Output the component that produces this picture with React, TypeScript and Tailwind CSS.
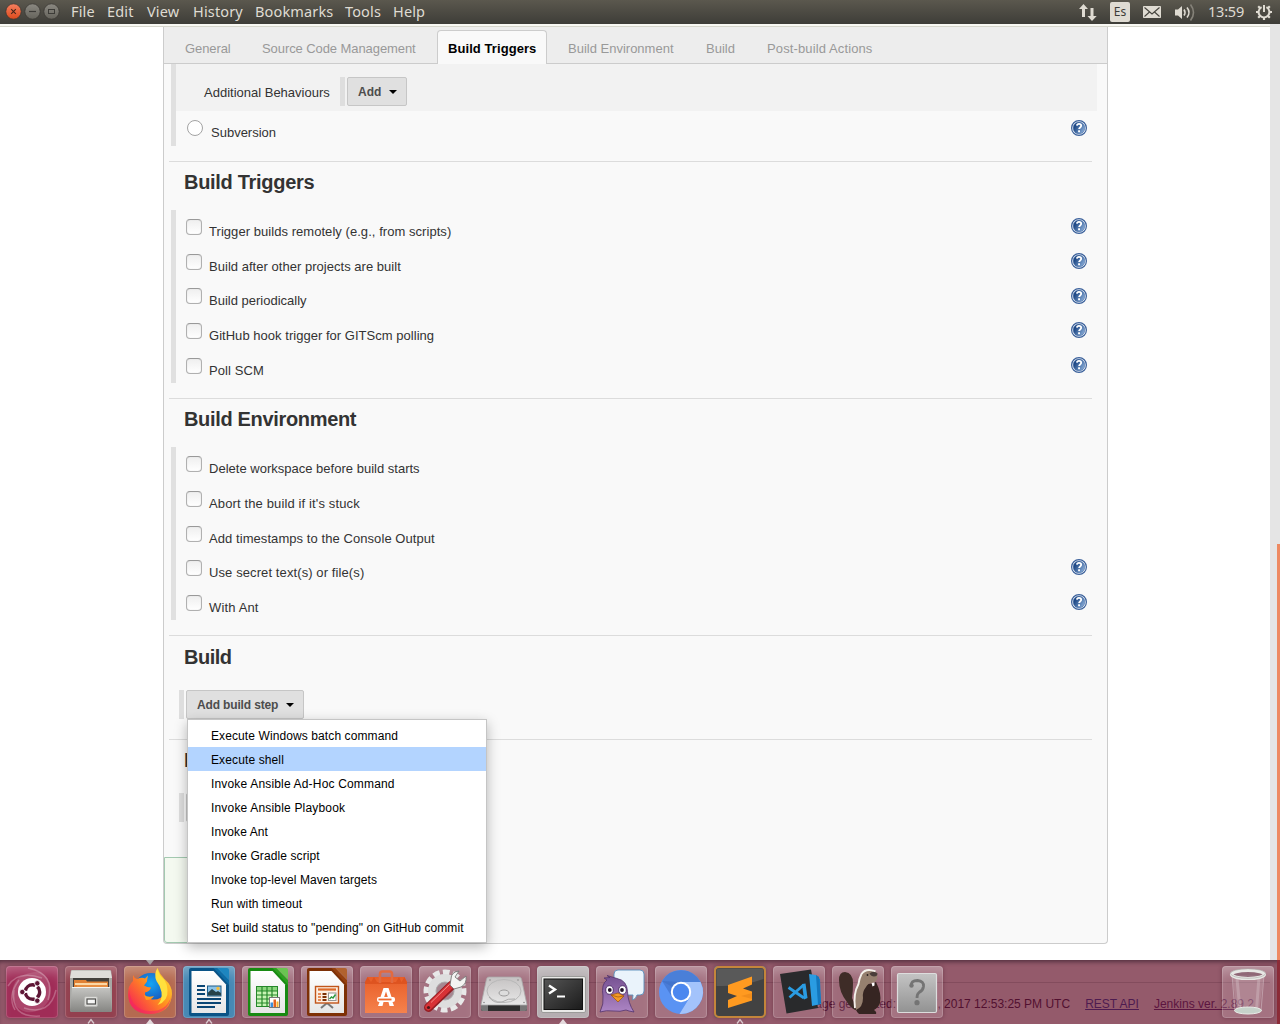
import React from "react";

const sans = "font-['Liberation_Sans',Arial,sans-serif]";

function HelpIcon() {
  return (
    <svg width="16" height="16" viewBox="0 0 16 16" className="block shrink-0">
      <defs>
        <linearGradient id="help" x1="0" y1="0.2" x2="1" y2="0.8">
          <stop offset="0.2" stopColor="#204a87" />
          <stop offset="1" stopColor="#8fb2dc" />
        </linearGradient>
      </defs>
      <circle cx="8" cy="8" r="7.4" fill="#fff" stroke="#3b619b" strokeWidth="1.2" />
      <circle cx="8" cy="8" r="5.9" fill="url(#help)" stroke="#4c72a9" strokeWidth="0.6" />
      <path d="M5.9 5.6C6 4.2 7 3.9 8 3.9c1.300 0 2.200.7 2.200 1.900 0 1.700-2.100 1.600-2.100 3.300" fill="none" stroke="#fff" strokeWidth="1.800" />
      <rect x="7.100" y="10.300" width="1.900" height="1.900" fill="#fff" />
    </svg>
  );
}

function Arrow() {
  return (
    <svg width="8" height="4" viewBox="0 0 8 4" className="block">
      <path d="M0 0h8L4 4z" fill="#000" />
    </svg>
  );
}

function GrayButton({ label, className }: { label: string; className: string }) {
  return (
    <div className="flex h-[29px] gap-[2px]">
      <div className="w-[5px] bg-[#dedede]" />
      <button className={`flex items-center justify-between rounded-[2px] border border-[#c6c6c6] bg-[#e0e0e0] pl-[10px] pr-[9px] text-[12px] font-bold text-[#4d4d4d] ${className}`}>
        <span className="whitespace-nowrap pt-px">{label}</span>
        <Arrow />
      </button>
    </div>
  );
}

type Option = { label: string; help?: boolean; track?: string };

function OptionList({ items, className = "" }: { items: Option[]; className?: string }) {
  return (
    <div className={`ml-[7px] mr-[20px] flex h-[173px] flex-col border-l-[5px] border-[#e0e0e0] ${className}`}>
      {items.map((o) => (
        <div key={o.label} className="flex h-[34.7px] shrink-0 items-start pl-[10px]">
          <div className="mt-[9px] size-4 shrink-0 rounded-[4px] border border-[#b0b0b0] border-t-[#999] bg-linear-to-b from-[#efefef] to-white shadow-[inset_0_0_1px_#ccc]" />
          <span className={`ml-[7px] mt-[12px] flex-1 text-[13px] leading-5 text-[#333] ${o.track ?? ""}`}>{o.label}</span>
          {o.help && (
            <span className="mt-[8.200px]">
              <HelpIcon />
            </span>
          )}
        </div>
      ))}
    </div>
  );
}

function SectionTitle({ children, className = "pt-[8px] tracking-[-0.300px]" }: { children: React.ReactNode; className?: string }) {
  return (
    <div className={`ml-[5px] mr-[15px] h-[49px] border-t border-[#dcdcdc] pl-[15px] text-[20px] font-bold leading-6 text-[#333] ${className}`}>
      {children}
    </div>
  );
}

const triggers: Option[] = [
  { label: "Trigger builds remotely (e.g., from scripts)", help: true, track: "tracking-[0.050px]" },
  { label: "Build after other projects are built", help: true, track: "tracking-[0.030px]" },
  { label: "Build periodically", help: true },
  { label: "GitHub hook trigger for GITScm polling", help: true, track: "tracking-[0.030px]" },
  { label: "Poll SCM", help: true, track: "tracking-[0.100px]" },
];

const environment: Option[] = [
  { label: "Delete workspace before build starts", track: "tracking-[0.010px]" },
  { label: "Abort the build if it's stuck", track: "tracking-[0.130px]" },
  { label: "Add timestamps to the Console Output", track: "tracking-[0.070px]" },
  { label: "Use secret text(s) or file(s)", help: true, track: "tracking-[0.100px]" },
  { label: "With Ant", help: true, track: "tracking-[0.150px]" },
];

const steps = [
  { label: "Execute Windows batch command", track: "tracking-[0.100px]" },
  { label: "Execute shell", track: "tracking-[0.120px]" },
  { label: "Invoke Ansible Ad-Hoc Command", track: "tracking-[0.170px]" },
  { label: "Invoke Ansible Playbook", track: "tracking-[0.180px]" },
  { label: "Invoke Ant", track: "tracking-[0.100px]" },
  { label: "Invoke Gradle script", track: "tracking-[0.100px]" },
  { label: "Invoke top-level Maven targets", track: "tracking-[0.090px]" },
  { label: "Run with timeout", track: "tracking-[0.120px]" },
  { label: 'Set build status to "pending" on GitHub commit', track: "tracking-[0.070px]" },
];

function StepMenu() {
  return (
    <div className="absolute left-[23px] top-[692px] w-[300px] border border-[#c5c5c5] bg-white py-[3px] text-[12px] text-black shadow-[0_4px_12px_rgba(0,0,0,0.28)]">
      {steps.map((s, i) => (
        <div key={s.label} className={`h-6 whitespace-nowrap pl-[23px] pt-px leading-6 ${s.track} ${i === 1 ? "bg-[#b3d4ff]" : ""}`}>
          {s.label}
        </div>
      ))}
    </div>
  );
}

function Tabs() {
  const tab = "h-full pt-[13px] leading-[18px] whitespace-nowrap";
  return (
    <div className="flex h-[37px] border-b border-[#ccc] bg-[#ededed] text-[13px] text-[#999]">
      <div className={`${tab} w-[77px] pl-[21px] tracking-[-0.100px]`}>General</div>
      <div className={`${tab} w-[196px] pl-[21px] tracking-[-0.080px]`}>Source Code Management</div>
      <div className="mt-[3px] h-[34px] w-[110px] whitespace-nowrap rounded-t-[4px] border border-b-0 border-[#ccc] bg-[#f9f9f9] pl-[10px] pt-[9px] font-bold leading-[18px] tracking-[0.070px] text-black">
        Build Triggers
      </div>
      <div className={`${tab} w-[138px] pl-[21px]`}>Build Environment</div>
      <div className={`${tab} w-[61px] pl-[21px]`}>Build</div>
      <div className={`${tab} pl-[21px] tracking-[0.120px]`}>Post-build Actions</div>
    </div>
  );
}

function ConfigPanel() {
  return (
    <div className="relative ml-[163px] h-[917px] w-[945px] rounded-b-[4px] border border-t-0 border-[#ccc] bg-[#f9f9f9]">
      <Tabs />
      <div className="ml-[7px] mr-[10px] h-[82px] border-l-[5px] border-[#e0e0e0]">
        <div className="flex h-[47px] items-start bg-[#f2f2f2] pt-[13px]">
          <span className="ml-[28px] w-[136px] pt-px text-[13px] leading-[30px] text-[#333]">Additional Behaviours</span>
          <GrayButton label="Add" className="w-[60px]" />
        </div>
        <div className="flex items-start pl-[11px] pr-[10px] pt-[9px]">
          <div className="size-4 rounded-full border border-[#a3a3a3] bg-white" />
          <span className="ml-[8px] mt-[3px] flex-1 text-[13px] leading-5 text-[#333]">Subversion</span>
          <HelpIcon />
        </div>
      </div>
      <div className="h-[15px]" />
      <SectionTitle>Build Triggers</SectionTitle>
      <OptionList items={triggers} />
      <div className="h-[15px]" />
      <SectionTitle className="pt-[8px] tracking-[-0.330px]">Build Environment</SectionTitle>
      <OptionList items={environment} className="pt-[0.200px]" />
      <div className="h-[15px]" />
      <SectionTitle className="pt-[9px] tracking-[-0.500px]">Build</SectionTitle>
      <div className="ml-[15px] mt-[6px] tracking-[-0.150px]">
        <GrayButton label="Add build step" className="w-[118px]" />
      </div>
      <div className="h-5" />
      <SectionTitle>P</SectionTitle>
      <div className="ml-[15px] mt-[5px]">
        <GrayButton label="" className="w-[118px]" />
      </div>
      <div className="mt-[35px] h-[86px] w-[200px] rounded-bl-[3px] border border-[#a3c9b0] bg-[#f4f9f0]" />
      <StepMenu />
    </div>
  );
}

const menuItems = [
  { label: "File", cls: "w-[36px]" },
  { label: "Edit", cls: "w-[40px]" },
  { label: "View", cls: "w-[46px]" },
  { label: "History", cls: "w-[62px]" },
  { label: "Bookmarks", cls: "w-[90px]" },
  { label: "Tools", cls: "w-[48px]" },
  { label: "Help", cls: "w-[40px]" },
];

function WindowButtons() {
  return (
    <svg width="65" height="24" viewBox="0 0 65 24" className="block shrink-0">
      <defs>
        <linearGradient id="closeBtn" x1="0" y1="0" x2="0" y2="1">
          <stop offset="0" stopColor="#f58060" />
          <stop offset="1" stopColor="#dd4a1c" />
        </linearGradient>
        <linearGradient id="grayBtn" x1="0" y1="0" x2="0" y2="1">
          <stop offset="0" stopColor="#8b8982" />
          <stop offset="1" stopColor="#65635b" />
        </linearGradient>
      </defs>
      <circle cx="13.500" cy="11.500" r="7.700" fill="url(#closeBtn)" stroke="#36342f" strokeWidth="0.700" />
      <path d="M11.200 9.200l4.600 4.600m0-4.600l-4.600 4.600" stroke="#45251a" strokeWidth="1.100" />
      <circle cx="32.500" cy="11.500" r="7.700" fill="url(#grayBtn)" stroke="#36342f" strokeWidth="0.700" />
      <path d="M29 11.500h7" stroke="#3c3b37" strokeWidth="1.200" />
      <circle cx="51.500" cy="11.500" r="7.700" fill="url(#grayBtn)" stroke="#36342f" strokeWidth="0.700" />
      <rect x="48.500" y="9.500" width="6" height="4" fill="none" stroke="#3c3b37" />
    </svg>
  );
}

function TopBar() {
  return (
    <div className="flex h-6 shrink-0 items-center bg-linear-to-b from-[#5b584e] to-[#3e3d38] font-['Noto_Sans',sans-serif] text-[14.500px] text-[#dfdbd2]">
      <WindowButtons />
      <div className="flex flex-1 pl-[6px] tracking-[0.150px]">
        {menuItems.map((m) => (
          <div key={m.label} className={`${m.cls} h-6 whitespace-nowrap leading-[22px]`}>
            {m.label}
          </div>
        ))}
      </div>
      <svg width="20" height="24" viewBox="0 0 20 24" className="mr-[11px]" fill="#dfdbd2">
        <path d="M4.500 4L9 9H6v8H3V9H0zM13 21L8.500 16h3V8h3v8h3.200z" />
      </svg>
      <div className="mr-[13px] h-5 w-5 rounded-[2px] bg-[#dfdbd2] text-center text-[12px] leading-5 text-[#3c3b37]">Es</div>
      <svg width="18" height="24" viewBox="0 0 18 24" className="mr-[14px]">
        <rect y="6" width="18" height="12" rx="0.800" fill="#dfdbd2" />
        <path d="M1.500 7.500L9 14l7.500-6.500M1.500 16.500L6.500 12M16.500 16.500L11.500 12" fill="none" stroke="#45433d" strokeWidth="1.100" />
      </svg>
      <svg width="21" height="24" viewBox="0 0 21 24" className="mr-[12px]" fill="none" stroke="#dfdbd2" strokeWidth="1.600">
        <path d="M0 9.500h3l4-3.500v13l-4-3.500H0z" fill="#dfdbd2" stroke="none" />
        <path d="M9 9.500q2 3 0 6" />
        <path d="M12 7.500q4 5 0 10" />
        <path d="M15.500 4.500q6 8 0 16" stroke="#858279" />
      </svg>
      <div className="h-6 w-[47px] whitespace-nowrap leading-[22px] tracking-[-0.200px]">13:59</div>
      <svg width="18" height="24" viewBox="0 0 18 24" className="mr-[7px]" fill="none" stroke="#dfdbd2">
        <path d="M6.600 7.200A5.400 5.400 0 1 0 11.400 7.200" strokeWidth="2" />
        <path d="M9 5v7" strokeWidth="2" />
        <path d="M1 12h2.500M14.500 12H17M9 17.500V20M3.200 6.200L5 8M13 8l1.800-1.800M3.200 17.800L5 16M13 16l1.800 1.800" strokeWidth="2.200" />
      </svg>
    </div>
  );
}

function DocBase({ dark, mid, light }: { dark: string; mid: string; light: string }) {
  return (
    <g>
      <path d="M8 2h25l13 15v31q0 2-2 2H8q-2 0-2-2V4q0-2 2-2z" fill={dark} />
      <path d="M8.500 5h22L43 18.500V47H8.500z" fill="url(#paper)" />
      <path d="M30.500 2h4L46 14v5z" fill={mid} />
      <path d="M34.500 2H44q2 0 2 2v9.500z" fill={light} />
    </g>
  );
}

const icons: Record<string, React.ReactNode> = {
  ubuntu: (
    <g fill="none">
      <path d="M2 20Q12 4 36 12M22 2Q50 8 42 34M50 24Q44 50 18 42M34 50Q4 52 8 24M9 44Q1 30 13 14" stroke="#fff" strokeOpacity="0.250" strokeWidth="1.500" />
      <path d="M6 26Q8 6 34 6Q48 14 44 32Q36 48 20 46Q6 42 6 26z" fill="#fff" fillOpacity="0.120" />
      <circle cx="26" cy="26" r="14" fill="#fff" />
      <circle cx="26.500" cy="26" r="7.200" stroke="#5d1535" strokeWidth="3.400" strokeDasharray="12.600 2.480" strokeDashoffset="-8.780" />
      <g fill="#5d1535" stroke="#fff" strokeWidth="0.800">
        <circle cx="16.300" cy="26" r="2.700" />
        <circle cx="31.300" cy="17.300" r="2.700" />
        <circle cx="31.300" cy="34.700" r="2.700" />
      </g>
    </g>
  ),
  files: (
    <g>
      <path d="M7 4h38q1 0 1.300 1.500L47 13v31q0 2-2 2H7q-2 0-2-2V13l.7-7.500Q6 4 7 4z" fill="#a8a8a5" />
      <path d="M6.500 4.500h39L47 12H5z" fill="#deddda" />
      <path d="M8 12h36v10H8z" fill="#42403d" />
      <path d="M9 14h12l1 1.500h21V22H9z" fill="#e08135" />
      <path d="M10 17h32v2H10z" fill="#fbd7a5" />
      <path d="M12 19h30v3H12z" fill="#e88f43" />
      <path d="M7 21h38l2 23q0 2-2 2H7q-2 0-2-2z" fill="url(#metal)" />
      <path d="M7 21.500h38" stroke="#f4f4f2" />
      <rect x="19.500" y="30.500" width="13" height="10" rx="1.500" fill="#dededb" stroke="#b7b7b4" />
      <rect x="22" y="33" width="8.500" height="5" fill="#f6f6f5" stroke="#4e4e4b" strokeWidth="1.200" />
    </g>
  ),
  firefox: (
    <g>
      <circle cx="27" cy="25" r="18" fill="url(#ffBlue)" />
      <path d="M9 9q1 3 4 4 5-2 8-.5l3-3q-1 5-1 6l-3 4q3 2 7 2-1 4-6 5-1 5 7 7 9 1 13-7 2-4-2-13l-5-4Q33 4 33.500 2q2 6 7 11 8 7 7.500 15-1 19-22 20Q5 47 4 29q0-10 5-14z" fill="url(#ffOrange)" />
      <path d="M33.500 2q-4 6-1 13 4 5 5 11 1 8-4 13 11-4 10-15 0-5-3-10-6-5-7-12z" fill="#ffe03d" />
      <path d="M20 29q4 3 10 1-2 4-8 4z" fill="#ff9c1c" />
      <path d="M5 23q2 21 20 22Q42 46 47 31q-3 17-22 17Q2 47 5 23z" fill="#f0246a" fillOpacity="0.500" />
    </g>
  ),
  writer: (
    <g>
      <DocBase dark="#0a5386" mid="#0c6ca6" light="#1d86c0" />
      <path d="M14 20h8M14 24h8M14 28h8M14 33h24M14 37h24M14 41h18" stroke="#0a4674" strokeWidth="2" />
      <rect x="24.500" y="20" width="13.500" height="10" fill="#8bc3e8" stroke="#1c5c88" />
      <path d="M25 29.500v-3l4-3.500 4 3 2-1 3 2v2.500z" fill="#264148" />
      <circle cx="35" cy="22.500" r="1.700" fill="#f5bd3c" />
    </g>
  ),
  calc: (
    <g>
      <DocBase dark="#188a12" mid="#2ca01f" light="#6ac451" />
      <rect x="14.500" y="20.500" width="21" height="20" fill="#c8f4b4" stroke="#25872a" />
      <path d="M15 21h20v4H15z" fill="#8cd67e" />
      <path d="M14.500 25h21M14.500 29h21M14.500 33h21M14.500 37h21M20 20.500v20M25 20.500v20M30 20.500v20" stroke="#25872a" strokeWidth="1.200" />
      <rect x="27.500" y="31.500" width="10" height="10" fill="#fff" stroke="#777" />
      <rect x="28.500" y="36.500" width="2.500" height="4.500" fill="#3b8edb" />
      <rect x="31.500" y="33.500" width="2.500" height="7.500" fill="#e4631e" />
      <rect x="34.500" y="35.500" width="2" height="5.500" fill="#f5b22d" />
    </g>
  ),
  impress: (
    <g>
      <DocBase dark="#7d3006" mid="#95400f" light="#b1622f" />
      <path d="M26 37l-6 5M26 37l6 5" stroke="#777" strokeWidth="2" />
      <rect x="14.500" y="20.500" width="23" height="16.500" fill="#fdeee2" stroke="#c1551a" strokeWidth="1.400" />
      <path d="M17 23.500h18" stroke="#dd6a28" strokeWidth="2.200" />
      <path d="M17 28h3M17 31h3M17 34h3" stroke="#e58a58" strokeWidth="1.800" />
      <path d="M21.500 28h4M21.500 31h4M21.500 34h4" stroke="#7d3006" strokeWidth="2" />
      <rect x="27.500" y="27" width="7.500" height="7.500" fill="#fff" stroke="#969696" />
      <path d="M28.500 33l2-2 1.500 1 2.500-3.500" fill="none" stroke="#2f9a3f" strokeWidth="1.500" />
    </g>
  ),
  software: (
    <g>
      <path d="M5 47V16l2.500-5h37l2.500 5v31z" fill="url(#bag)" />
      <path d="M5 16l2.500-5 3.500 5 3-5 3 5h19l3-5 2.500 5 3-5 2.500 5v2H5z" fill="#d94d1b" fillOpacity="0.700" />
      <path d="M20 17V8q0-2.500 2.500-2.500h7Q32 5.500 32 8v9" fill="none" stroke="#e26a40" strokeWidth="2.600" />
      <path d="M23.500 22h5l3 9h-3.700L26 25.500 24.200 31h-3.700zM19.500 36h4l-1 4h-4.500zM28.500 36h4l1.500 4h-4.500z" fill="#fff" />
      <rect x="17" y="31" width="18" height="5" rx="2" fill="#fff" />
      <path d="M18.500 33.500h13" stroke="#ef6b31" strokeWidth="1.800" />
    </g>
  ),
  settings: (
    <g>
      <circle cx="26" cy="25" r="18.500" fill="none" stroke="#e8e8e8" strokeWidth="6" strokeDasharray="6.400 3.287" transform="rotate(-8 26 25)" />
      <circle cx="26" cy="25" r="13" fill="#fff" fillOpacity="0.300" stroke="#dedede" strokeWidth="8" />
      <circle cx="26" cy="25" r="9" fill="#000" fillOpacity="0.130" stroke="#aaa" />
      <path d="M9.500 41.500L33 19" stroke="#941e24" strokeWidth="9" strokeLinecap="round" />
      <path d="M9.500 41L33 18.500" stroke="#d83236" strokeWidth="6.500" strokeLinecap="round" />
      <path d="M12 36.500L32 17" stroke="#f58b86" strokeWidth="1" />
      <circle cx="9.500" cy="41.500" r="1.600" fill="#4e171b" />
      <path d="M31 19l4 4 7-2q6-3 5-11l-6 5-5-4 4-6q-8 1-8 8z" fill="#f4f4f2" stroke="#777" strokeWidth="0.900" />
    </g>
  ),
  disk: (
    <g>
      <path d="M3 39h46v4q0 2-2 2H5q-2 0-2-2z" fill="#2e2e2e" />
      <path d="M3 39h7v6H5q-2 0-2-2zM42 39h7v4q0 2-2 2h-5z" fill="#777" />
      <path d="M11 11h30q2 0 2.500 2L49 39H3l5.500-26Q9 11 11 11z" fill="url(#metalLight)" stroke="#aaa" strokeWidth="0.800" />
      <ellipse cx="26" cy="25" rx="17" ry="11.500" fill="none" stroke="#b8b8b8" />
      <path d="M11 31q5 7 13 5 6-4 13-3" fill="none" stroke="#aaa" />
      <ellipse cx="26" cy="27" rx="5" ry="3" fill="#ddd" stroke="#9c9c9c" />
      <circle cx="12" cy="14" r="0.800" fill="#888" />
      <circle cx="40" cy="14" r="0.800" fill="#888" />
      <circle cx="6" cy="36.500" r="0.800" fill="#888" />
      <circle cx="46" cy="36.500" r="0.800" fill="#888" />
    </g>
  ),
  terminal: (
    <g>
      <rect x="4.500" y="10.500" width="44" height="36" rx="1.500" fill="#e9e9e7" stroke="#9b9b99" />
      <rect x="7" y="13" width="38.500" height="30.500" fill="url(#screen)" stroke="#111" />
      <path d="M12 19.500l6 4-6 4" fill="none" stroke="#fff" strokeWidth="2.400" />
      <path d="M20 30.500h8" stroke="#fff" strokeWidth="2" />
    </g>
  ),
  pidgin: (
    <g>
      <path d="M22 4h22q4 0 4 4v17q0 4-4 4h-3q-1 4-4.500 5l.5-5H22q-4 0-4-4V8q0-4 4-4z" fill="#eaf3fb" stroke="#5a8fbb" strokeWidth="0.900" />
      <path d="M11 14l-3-2 6-.5-3-2 10 3q10 2 10.500 13Q32 37 38 46q-6-1-8-2-6 2-12 1-8-1-14 1 4-8 3-16Q5 18 11 14z" fill="url(#bird)" stroke="#53336d" strokeWidth="0.800" />
      <ellipse cx="13.500" cy="24" rx="3.800" ry="4.300" fill="#fff" stroke="#53336d" />
      <ellipse cx="26.500" cy="24" rx="3.800" ry="4.300" fill="#fff" stroke="#53336d" />
      <circle cx="13.800" cy="24" r="1.900" fill="#201127" />
      <circle cx="26" cy="24" r="1.900" fill="#201127" />
      <path d="M15 29l7-2 6 3-6 6z" fill="#f49a24" stroke="#9c5310" strokeWidth="0.700" />
      <path d="M15 29l7 2 6-1" fill="none" stroke="#9c5310" strokeWidth="0.700" />
    </g>
  ),
  chromium: (
    <g>
      <circle cx="26" cy="26" r="22" fill="#5a93f3" />
      <path d="M26 26L7 15A22 22 0 0 1 45.500 16H26z" fill="#4a7fd8" />
      <path d="M26 16h19.500A22 22 0 0 1 24.500 48L35 31z" fill="#a3c3fb" />
      <path d="M7 15L17 31l9-15z" fill="#3d6cc4" fillOpacity="0.600" />
      <circle cx="26" cy="26" r="10.200" fill="#fff" />
      <circle cx="26" cy="26" r="8.200" fill="#4b87ef" />
    </g>
  ),
  sublime: (
    <g>
      <rect x="1" y="1" width="50" height="50" rx="4" fill="#424242" stroke="#c4853b" strokeWidth="2" />
      <path d="M2.500 5q0-2.500 2.500-2.500h42q2.500 0 2.500 2.500v8q-22 8-47 7z" fill="#fff" fillOpacity="0.120" />
      <path d="M14 19L38 10.500v8L29 22.500l9 3v9L14 42v-8l9-4-9-3z" fill="#ff9a20" />
      <path d="M27 30l11-3v6z" fill="#dc7b13" fillOpacity="0.400" />
    </g>
  ),
  vscode: (
    <g>
      <path d="M36 8l11 5 1 24-12 4z" fill="#1683cf" />
      <path d="M7 8l31-4.500L45 42l-31.500 5.500z" fill="#292a2c" />
      <path d="M36 8l7 1 5 29-9 2z" fill="#2a9ce2" />
      <path d="M43 9l3 2 2 26-3 2z" fill="#1377bd" />
      <path d="M15.500 21.500L31 32M16.500 31.500L30.500 19" stroke="#2a9ce2" strokeWidth="2.800" />
      <path d="M29 18l3.500-.5 2 14.500-3.500 1.500z" fill="#2a9ce2" />
    </g>
  ),
  beaver: (
    <g>
      <path d="M7 14q0-8 6-8 8 1 8 11 0 8-1 15l6 13q-7-2-11-9Q7 26 7 14z" fill="#3e2c27" />
      <path d="M32 17q6 2 12-1 6 12 4 21-2 5-6 7 3 2 2 4H27q-5-4-3-14z" fill="#362522" />
      <path d="M43 5Q34 2 30 8 27 13 27 18 20 29 24 44q7-3 7-12-1-6 3-11 2-4 6-4 7-1 5-10z" fill="#96806f" />
      <path d="M43.500 5.500Q34 1.500 29.500 8 27 13 26.500 18 21 28 23 42" fill="none" stroke="#f5f1eb" strokeWidth="1.900" />
      <path d="M37.500 7.500q4-3.500 8 0 0 3-3.500 3-3 0-4.500-3z" fill="#4a3e3a" />
      <circle cx="35.500" cy="9" r="0.900" fill="#292020" />
      <path d="M39.500 17l3-.5v3l-2 1z" fill="#fff" />
    </g>
  ),
  unknown: (
    <g>
      <rect x="6.500" y="7.500" width="39" height="39" rx="1.500" fill="url(#unk)" stroke="#ddd" strokeWidth="1.200" />
      <path d="M20.500 20q-1-5.500 6-5.500 6.500.5 6 6-.5 4-4.500 6-2 1.500-2 5.500" fill="none" stroke="#747474" strokeWidth="2.800" />
      <circle cx="20.500" cy="19.500" r="2.200" fill="#747474" />
      <circle cx="26" cy="36.700" r="2.600" fill="#747474" />
    </g>
  ),
  trash: (
    <g>
      <path d="M10 9l5 36q11 5 22 0l5-36z" fill="#fff" fillOpacity="0.140" />
      <path d="M10 9l3 36M42 9l-3 36" stroke="#e7dce1" strokeOpacity="0.400" />
      <path d="M37 11l-2.500 33M15 13l3 31" stroke="#fff" strokeOpacity="0.200" strokeWidth="3" />
      <ellipse cx="26" cy="44.500" rx="13.500" ry="3.500" fill="#c6d2ca" stroke="#e9ece8" />
      <ellipse cx="26" cy="8.500" rx="16.500" ry="4" fill="#71505f" fillOpacity="0.500" stroke="#e7e7e4" strokeWidth="3.200" />
      <ellipse cx="26" cy="7.500" rx="17.500" ry="4.800" fill="none" stroke="#a7a7a5" strokeWidth="0.600" />
    </g>
  ),
};

const dockItems: { id: string; bg: string; mark?: "fill" | "line" }[] = [
  { id: "ubuntu", bg: "bg-[#a02c57]" },
  { id: "files", bg: "bg-[#93404f]", mark: "line" },
  { id: "firefox", bg: "bg-[#b56a50]", mark: "fill" },
  { id: "writer", bg: "bg-[#4588b4]", mark: "line" },
  { id: "calc", bg: "bg-white/15" },
  { id: "impress", bg: "bg-white/15" },
  { id: "software", bg: "bg-white/15" },
  { id: "settings", bg: "bg-white/15" },
  { id: "disk", bg: "bg-white/15" },
  { id: "terminal", bg: "bg-[#b5aeb1]", mark: "fill" },
  { id: "pidgin", bg: "bg-white/15" },
  { id: "chromium", bg: "bg-white/15" },
  { id: "sublime", bg: "bg-[#424242]", mark: "line" },
  { id: "vscode", bg: "bg-white/10" },
  { id: "beaver", bg: "bg-white/10" },
  { id: "unknown", bg: "bg-white/15" },
];

function DockTile({ id, bg, mark }: { id: string; bg: string; mark?: "fill" | "line" }) {
  return (
    <div className="flex w-[52px] flex-col items-center">
      <div className="flex h-[6px] items-start">
        {id === "firefox" && (
          <svg width="8" height="5" viewBox="0 0 8 5" className="block">
            <path d="M0 0h8L4 5z" fill="#a9a3a6" />
          </svg>
        )}
      </div>
      <div className={`size-[52px] rounded-[4px] shadow-[0_0_4px_rgba(50,10,25,0.35),inset_0_0_0_1px_rgba(255,255,255,0.16),inset_0_12px_12px_-6px_rgba(255,255,255,0.28)] ${bg}`}>
        <svg width="52" height="52" viewBox="0 0 52 52" className="block">
          {icons[id]}
        </svg>
      </div>
      {mark && (
        <svg width="8" height="6" viewBox="0 0 8 6" className="block">
          {mark === "fill" ? <path d="M4 1l4 5H0z" fill="#e4dadd" /> : <path d="M1 5.500l3-4 3 4" fill="none" stroke="#d8c8ce" strokeWidth="1.300" />}
        </svg>
      )}
    </div>
  );
}

function Gradients() {
  return (
    <svg width="0" height="0" className="absolute">
      <defs>
        <linearGradient id="paper" x1="0" y1="0" x2="0" y2="1">
          <stop offset="0" stopColor="#fff" />
          <stop offset="1" stopColor="#e6e6e6" />
        </linearGradient>
        <linearGradient id="metal" x1="0" y1="0" x2="0" y2="1">
          <stop offset="0" stopColor="#c6c6c3" />
          <stop offset="1" stopColor="#858582" />
        </linearGradient>
        <linearGradient id="metalLight" x1="0" y1="0" x2="0" y2="1">
          <stop offset="0" stopColor="#c5c2c2" />
          <stop offset="1" stopColor="#e8e8e8" />
        </linearGradient>
        <linearGradient id="bag" x1="0" y1="0" x2="0" y2="1">
          <stop offset="0" stopColor="#e85d28" />
          <stop offset="1" stopColor="#f5824c" />
        </linearGradient>
        <linearGradient id="screen" x1="0" y1="0" x2="1" y2="1">
          <stop offset="0" stopColor="#555" />
          <stop offset="1" stopColor="#1b1b1b" />
        </linearGradient>
        <linearGradient id="bird" x1="0" y1="0" x2="0" y2="1">
          <stop offset="0" stopColor="#755091" />
          <stop offset="1" stopColor="#ad85c4" />
        </linearGradient>
        <linearGradient id="unk" x1="0" y1="0" x2="0" y2="1">
          <stop offset="0" stopColor="#c4c4c4" />
          <stop offset="1" stopColor="#929292" />
        </linearGradient>
        <radialGradient id="ffBlue" cx="0.500" cy="0.300" r="0.700">
          <stop offset="0" stopColor="#14a5f5" />
          <stop offset="1" stopColor="#1a3aa5" />
        </radialGradient>
        <linearGradient id="ffOrange" x1="0.900" y1="0.100" x2="0.100" y2="0.800">
          <stop offset="0" stopColor="#ffd62e" />
          <stop offset="0.500" stopColor="#ff8b1f" />
          <stop offset="1" stopColor="#f8304e" />
        </linearGradient>
      </defs>
    </svg>
  );
}

function Dock() {
  return (
    <div className="relative h-16 shrink-0 overflow-hidden bg-[#945a6b] shadow-[inset_0_4px_4px_-2px_#54303f]">
      <Gradients />
      <div className="absolute right-0 top-0 h-full w-[3px] bg-[#8c2c38]" />
      <div className="h-[23px] w-[1270px] border-b border-[#834c5d]" />
      <div className={`flex w-[1254px] justify-end gap-[15px] whitespace-nowrap pt-[13px] text-[12px] leading-4 text-[#521030] ${sans}`}>
        <span>Page generated: Dec 27, 2017 12:53:25 PM UTC</span>
        <span className="text-[#4e1b50] underline">REST API</span>
        <span className="text-[#5c1540] underline">Jenkins ver. 2.89.2</span>
      </div>
      <div className="absolute inset-0 flex gap-[7px] px-[6px]">
        {dockItems.map((d) => (
          <DockTile key={d.id} {...d} />
        ))}
        <div className="ml-auto">
          <DockTile id="trash" bg="bg-white/15" />
        </div>
      </div>
    </div>
  );
}

export default function App() {
  return (
    <div className="flex h-[1024px] w-[1280px] flex-col overflow-hidden bg-white">
      <TopBar />
      <div className={`flex h-[936px] shrink-0 justify-between ${sans}`}>
        <div className="w-[1270px]">
          <div className="h-[3px] border-b border-[#d6d6cc] bg-[#f8f8f3]" />
          <ConfigPanel />
        </div>
        <div className="flex w-[10px] items-end justify-end bg-[#e5e5e5]">
          <div className="h-[416px] w-[3px] bg-[#ee8a62]" />
        </div>
      </div>
      <Dock />
    </div>
  );
}
